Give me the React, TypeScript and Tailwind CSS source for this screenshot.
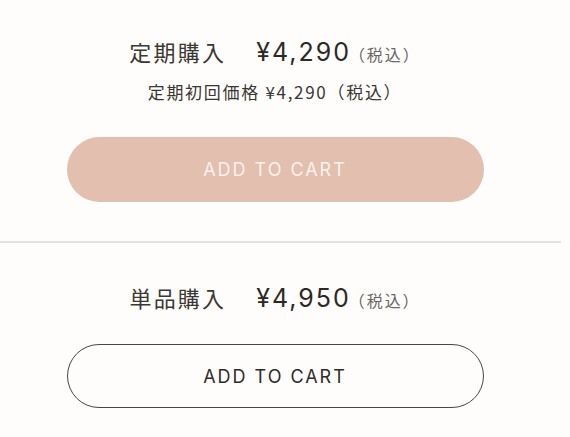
import React from "react";

const latin = "font-['Inter','Noto_Sans_CJK_JP',sans-serif]";
const jp = "font-['Noto_Sans_CJK_JP',sans-serif] [text-spacing-trim:space-all]";

type PriceProps = {
  label: string;
  price: string;
};

function PriceLine({ label, price }: PriceProps) {
  return (
    <div className="flex items-baseline justify-center h-[30px] leading-[30px]">
      <span className={`${jp} text-[22px] tracking-[0.1em] text-[#3b3733]`}>{label}</span>
      <span className={`${latin} ml-[30px] text-[25px] tracking-[0.08em] text-[#2c2925]`}>{price}</span>
      <span className={`${jp} -ml-[2px] text-[16px] tracking-[0.12em] text-[#6a6661]`}>（税込）</span>
    </div>
  );
}

export default function App() {
  return (
    <div className="w-[570px] h-[437px] bg-[#fefdfc] overflow-hidden">
      {/* subscription */}
      <div className="w-[550px] flex flex-col items-center pt-[36px]">
        <PriceLine label="定期購入" price="¥4,290" />
        <div className={`${jp} mt-[14px] h-[24px] leading-[24px] text-[17px] tracking-[0.1em] text-[#3a3733]`}>
          定期初回価格 ¥4,290（税込）
        </div>
        <button className="mt-[33px] w-[417px] h-[65px] rounded-full bg-[#e2bfae] text-[#fbf1ec] font-['Inter',sans-serif] text-[18px] tracking-[0.11em]">
          ADD TO CART
        </button>
      </div>

      <div className="mt-[39px] w-[561px] h-[2px] bg-[#e4e2e0]" />

      {/* single purchase */}
      <div className="w-[550px] flex flex-col items-center pt-[39px]">
        <PriceLine label="単品購入" price="¥4,950" />
        <button className="mt-[32px] w-[417px] h-[64px] rounded-full border border-[#4a4540] bg-transparent text-[#2e2b28] font-['Inter',sans-serif] text-[18px] tracking-[0.11em]">
          ADD TO CART
        </button>
      </div>
    </div>
  );
}
